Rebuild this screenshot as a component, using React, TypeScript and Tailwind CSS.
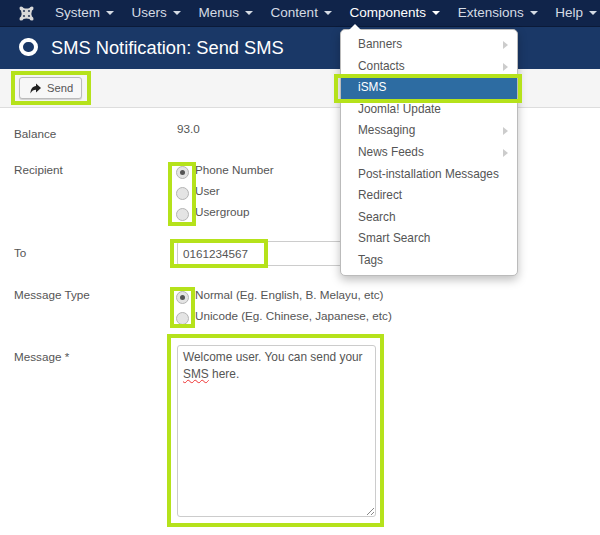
const menu = ["System", "Users", "Menus", "Content", "Components", "Extensions", "Help"];
const items: [string, boolean][] = [
  ["Banners", true],
  ["Contacts", true],
  ["iSMS", false],
  ["Joomla! Update", false],
  ["Messaging", true],
  ["News Feeds", true],
  ["Post-installation Messages", false],
  ["Redirect", false],
  ["Search", false],
  ["Smart Search", false],
  ["Tags", false],
];

function Caret({ light }: { light?: boolean }) {
  return <span className={`ml-[6px] inline-block w-0 h-0 border-x-[4px] border-x-transparent border-t-[4px] ${light ? "border-t-white" : "border-t-[#d5dbe4]"}`} />;
}

function Radio({ on }: { on?: boolean }) {
  return (
    <span className="w-[13px] h-[13px] rounded-full border border-[#b4b4b4] bg-[#e4e4e4] flex items-center justify-center shrink-0">
      {on && <span className="w-[5px] h-[5px] rounded-full bg-[#555]" />}
    </span>
  );
}

function RadioRow({ on, label }: { on?: boolean; label: string }) {
  return (
    <div className="flex h-[20.8px] items-start">
      <span className="ml-[-1px] mr-[6px] mt-[5px]"><Radio on={on} /></span>
      <span className="leading-[17px]">{label}</span>
    </div>
  );
}

function Mark({ className }: { className: string }) {
  return <div className={`absolute border-[4px] border-[#b5e21b] pointer-events-none ${className}`} />;
}

export default function App() {
  return (
    <div className="relative w-[600px] h-[535px] overflow-hidden bg-white text-[11.7px] text-[#555] font-['Liberation_Sans',Arial,sans-serif]">
      <nav className="h-[27px] bg-[#10244a] border-b border-[#0b1a38] flex items-center pl-[19px] text-[13.5px] text-[#d5dbe4]">
        <svg width="15" height="15" viewBox="0 0 15 15" className="mr-[21px]">
          <path d="M2 0.5Q4 0.5 4.5 2Q7.5 3.2 10.5 2Q11 0.5 13 0.5Q14.5 0.5 14.5 2Q14.5 4 13 4.5Q11.8 7.5 13 10.5Q14.5 11 14.5 13Q14.5 14.5 13 14.5Q11 14.5 10.5 13Q7.5 11.8 4.5 13Q4 14.5 2 14.5Q0.5 14.5 0.5 13Q0.5 11 2 10.5Q3.2 7.5 2 4.5Q0.5 4 0.5 2Q0.5 0.5 2 0.5Z" fill="#d9d9d9" />
          <circle cx="5" cy="5" r="1.1" fill="#33415e" />
          <circle cx="10" cy="5" r="1.1" fill="#33415e" />
          <circle cx="5" cy="10" r="1.1" fill="#33415e" />
          <circle cx="10" cy="10" r="1.1" fill="#33415e" />
        </svg>
        <div className="flex gap-[17.6px]">
          {menu.map((m) => (
            <span key={m} className={`flex items-center ${m === "Components" ? "text-white" : ""}`}>
              {m}
              <Caret light={m === "Components"} />
            </span>
          ))}
        </div>
      </nav>

      <header className="h-[42px] bg-[#1a3867] flex items-center pl-[19px] text-white text-[18.3px]">
        <span className="w-[19px] h-[18px] mb-[2px] rounded-full border-[4.5px] border-white mr-[13px]" />
        SMS Notification: Send SMS
      </header>

      <div className="h-[39px] bg-[#f5f5f5] border-b border-[#ddd] flex items-center pl-[19px]">
        <button className="h-[22px] w-[63px] border border-[#bbb] rounded-[3px] bg-[#f7f7f7] shadow-[0_1px_1px_rgba(0,0,0,0.15)] flex items-center pl-[10px] gap-[6px] text-[11.2px] text-[#555]">
          <svg width="11" height="11" viewBox="0 0 11 11" fill="#222">
            <path d="M6 0.5L11 5L6 9.5V6.8C3.6 6.8 1.8 7.8 0.5 10.5C0.5 6.2 2.6 3.3 6 3Z" />
          </svg>
          Send
        </button>
      </div>

      <main className="pl-[14px]">
        <div className="flex h-[52px]">
          <label className="w-[163px] pt-[17px] leading-[17px]">Balance</label>
          <span className="pt-[12px] leading-[17px]">93.0</span>
        </div>
        <div className="flex h-[81px]">
          <label className="w-[163px] pt-[1px] leading-[17px]">Recipient</label>
          <div className="pt-[1px]">
            <RadioRow on label="Phone Number" />
            <RadioRow label="User" />
            <RadioRow label="Usergroup" />
          </div>
        </div>
        <div className="flex h-[42px]">
          <label className="w-[163px] pt-[3px] leading-[17px]">To</label>
          <div className="w-[200px] h-[25px] border border-[#ccc] pl-[5px] leading-[23px] rounded-[3px]">0161234567</div>
        </div>
        <div className="flex h-[62px]">
          <label className="w-[163px] pt-[3px] leading-[17px]">Message Type</label>
          <div className="pt-[3px]">
            <RadioRow on label="Normal (Eg. English, B. Melayu, etc)" />
            <RadioRow label="Unicode (Eg. Chinese, Japanese, etc)" />
          </div>
        </div>
        <div className="flex">
          <label className="w-[163px] pt-[3px] leading-[17px]">Message *</label>
          <div className="relative w-[199px] h-[172px] border border-[#ccc] rounded-[3px] px-[5px] py-[3px] text-[11.9px] leading-[16.5px]">
            Welcome user. You can send your <span className="underline decoration-wavy decoration-[#e33] decoration-1">SMS</span> here.
            <svg width="8" height="8" viewBox="0 0 8 8" className="absolute right-[1px] bottom-[1px]" stroke="#888">
              <path d="M1 8L8 1M5 8L8 5" />
            </svg>
          </div>
        </div>
      </main>

      {/* Dropdown menu */}
      <div className="absolute left-[340px] top-[29px] w-[178px] h-[247px] bg-white border border-[#bbb] rounded-[5px] shadow-[0_4px_10px_rgba(0,0,0,0.25)] pt-[4px] text-[11.85px]">
        <div className="absolute left-[8px] top-[-6px] w-0 h-0 border-x-[6px] border-x-transparent border-b-[6px] border-b-white" />
        {items.map(([t, arrow]) => (
          <div key={t} className={`relative h-[21.6px] leading-[21.6px] pl-[17px] ${t === "iSMS" ? "bg-[#2d6ca2] text-white" : "text-[#555]"}`}>
            {t}
            {arrow && <span className="absolute right-[9px] top-[7px] w-0 h-0 border-y-[4px] border-y-transparent border-l-[5px] border-l-[#ccc]" />}
          </div>
        ))}
      </div>

      {/* Annotation highlights */}
      <Mark className="left-[11px] top-[71px] w-[80px] h-[34px]" />
      <Mark className="left-[334px] top-[74px] w-[188px] h-[29px]" />
      <Mark className="left-[168px] top-[162px] w-[28px] h-[64px]" />
      <Mark className="left-[170px] top-[239px] w-[98px] h-[29px]" />
      <Mark className="left-[170px] top-[287px] w-[25px] h-[41px]" />
      <Mark className="left-[167px] top-[334px] w-[217px] h-[193px]" />
    </div>
  );
}
